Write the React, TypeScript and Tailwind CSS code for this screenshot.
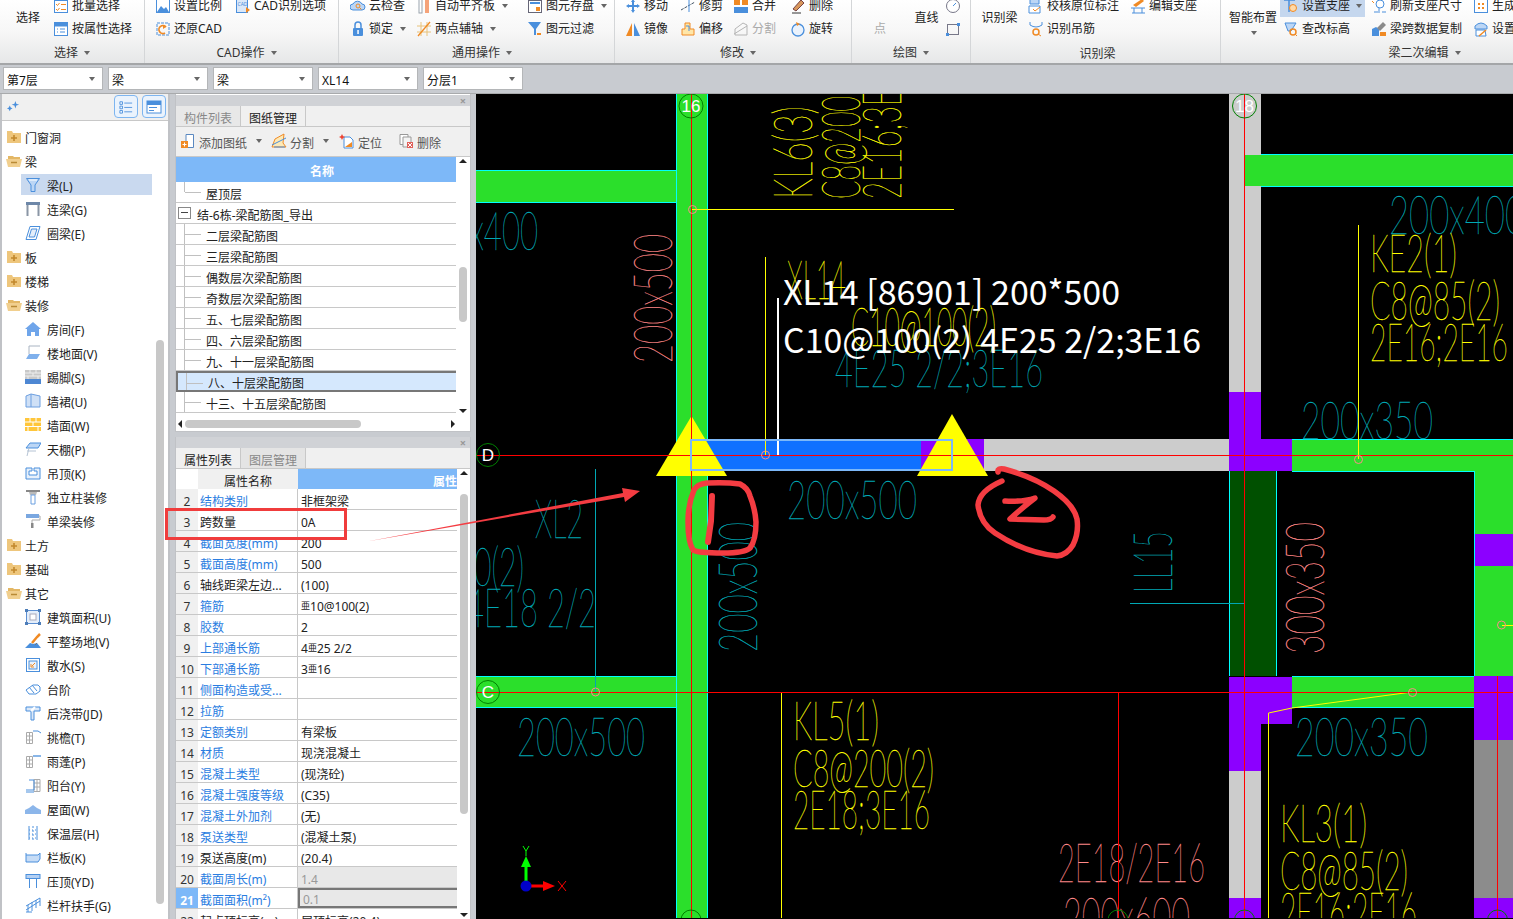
import React from "react";

const B = "#4a8fdc";
const L = "#bcd6f5";
const O = "#f08a24";
const G = "#9aa3ad";

const icons: Record<string, React.ReactNode> = {
  batch: (<><rect x="1.5" y="2.5" width="13" height="12" fill="#fff" stroke={B} /><path d="M3 6l1.5 1.5L6.5 5M8 6.5h5M3 11l1.5 1.5 2-2.5M8 11.500h5" stroke={O} fill="none" /></>),
  prop: (<><rect x="1.5" y="1.500" width="13" height="13" fill="#fff" stroke={B} /><rect x="1.500" y="1.500" width="13" height="4" fill={B} /><path d="M4 8h1M7 8h5M4 11h1M7 11h5" stroke={B} /></>),
  scale: (<><rect x="1.500" y="1.500" width="13" height="13" fill="#fff" stroke={B} /><path d="M2 14l4-6 3 3 2-2 3 5z" fill={B} /></>),
  cadopt: (<><rect x="1.500" y="1.500" width="11" height="13" fill="#dbe8f8" stroke={B} /><text x="2.500" y="8" fontSize="5" fill={B}>CAD</text><path d="M11 9l4 3-4 3z" fill={O} /></>),
  restore: (<><path d="M2 2h12v12H2z" fill="none" stroke={B} strokeDasharray="3 1" /><path d="M11 6a4 4 0 1 0-1 6" fill="none" stroke={O} strokeWidth="1.700" /><path d="M8 4l3 2-3 2z" fill={O} /></>),
  cloud: (<><path d="M3 12a3 3 0 0 1 0-6 5 5 0 0 1 9 0 3 3 0 0 1 0 6z" fill={L} stroke={B} /><circle cx="8" cy="8" r="2" fill="none" stroke={O} /><path d="M9.500 9.500l2 2" stroke={O} /></>),
  align: (<><rect x="3" y="1" width="3" height="14" fill="#fff" stroke={G} /><rect x="9" y="1" width="4" height="14" fill="#f5a37a" /></>),
  save: (<><rect x="1.500" y="2.500" width="13" height="12" fill="#fff" stroke="#667" /><rect x="3" y="4" width="10" height="2" fill={B} /><rect x="9" y="9" width="4" height="4" fill={O} /></>),
  lock: (<><path d="M5 7V4a3 3 0 0 1 6 0v3" fill="none" stroke={B} strokeWidth="1.500" /><rect x="3" y="7" width="10" height="8" rx="1" fill={B} /><rect x="7.300" y="9" width="1.500" height="4" fill="#fff" /></>),
  twopt: (<><path d="M1 5h14M1 11h14M5 1v14M11 1v14" stroke="#e8c27a" /><path d="M2 15L14 1" stroke={O} strokeWidth="1.300" /></>),
  filter: (<><path d="M1 1h13L9 8v6H7V8z" fill={B} /><path d="M10 13h4" stroke={O} strokeWidth="2" /></>),
  move: (<path d="M8 1l2 3H9v3h3V6l3 2-3 2V9H9v3h1l-2 3-2-3h1V9H4v1L1 8l3-2v1h3V4H6z" fill={B} />),
  trim: (<><path d="M1 12l14-8" stroke="#456" strokeDasharray="3 1" /><path d="M9 2v12" stroke={B} /></>),
  merge: (<><rect x="1" y="1" width="6" height="6" fill={O} /><rect x="9" y="1" width="6" height="6" fill={O} /><rect x="1" y="9" width="14" height="6" fill={B} /></>),
  del: (<><path d="M3 11L11 2l3 3-8 8z" fill="#d8975c" stroke="#744" /><path d="M2 15h9" stroke="#333" /></>),
  mirror: (<><path d="M7 2v13H1z" fill={O} /><path d="M9 2v13h6z" fill={B} /></>),
  offset: (<><path d="M5 2h5v6h4v6H2V8h3z" fill="#ffe6a8" stroke={O} /><path d="M6 5h3v5" fill="none" stroke={B} /></>),
  split: (<><path d="M2 14V8l8-6 4 2v10z" fill="none" stroke="#b5b5b5" /><path d="M1 13l13-8" stroke="#b5b5b5" /></>),
  rotate: (<><circle cx="8" cy="9" r="6" fill="#eaf2fc" stroke={B} strokeWidth="1.300" /><path d="M6 1l4 2-3 2z" fill={O} /></>),
  circ: (<><circle cx="8" cy="8" r="6.500" fill="#fff" stroke="#778" /><path d="M8 8l3-3" stroke={B} /></>),
  rect: (<><rect x="2.500" y="3.500" width="11" height="10" fill="none" stroke="#778" /><rect x="1" y="12" width="3" height="3" fill={B} /><rect x="12" y="2" width="3" height="3" fill={B} /></>),
  check: (<><path d="M2 1h9v5H2z" fill={L} stroke={B} /><path d="M1 8h11v7H1z" fill="#fff" stroke={B} /><path d="M5 11l2 2 5-4" stroke={O} fill="none" /></>),
  edit: (<><path d="M3 7L12 1l2 2-8 6z" fill={O} /><path d="M1 10h14M4 10v5M12 10v5M2 15h13" stroke={B} fill="none" /></>),
  hang: (<><path d="M2 1v3q6 4 12 0V1" fill="none" stroke={B} /><circle cx="8" cy="11" r="3" fill="none" stroke={O} strokeWidth="1.500" /><path d="M10 13l3 2" stroke={O} /></>),
  support: (<><path d="M1 2h11M6 2v12" stroke={B} strokeWidth="1.500" /><circle cx="10" cy="10" r="3.500" fill="#ffd9a8" stroke={O} /></>),
  level: (<><path d="M2 2h11l-5 8H5z" fill={L} stroke={B} /><circle cx="10" cy="11" r="3" fill="none" stroke={O} strokeWidth="1.500" /><path d="M12 13l2 2" stroke={O} /></>),
  refresh: (<><circle cx="9" cy="6" r="4" fill="#fff" stroke={B} /><path d="M3 14h4M11 14h4M8 10v5" stroke={B} /><path d="M1 3l2 2" stroke={O} /></>),
  copy: (<><path d="M1 15V8l4-2 3 2v7z" fill={B} /><path d="M6 7l6-6 3 3-6 6z" fill="#8b8b8b" /><path d="M9 11h6v4H9z" fill={O} /></>),
  gen: (<><rect x="1.500" y="1.500" width="13" height="13" fill="#fff" stroke={B} /><path d="M5 5h2v2H5zM9 5h2v2H9zM5 9h2v2H5zM9 9h2v2H9z" fill={O} /></>),
  setup: (<><path d="M2 5q6-6 12 0v3H2z" fill={L} stroke={B} /><path d="M3 9h9l1 6H3z" fill="#fff" stroke={B} /><path d="M6 15l7-6" stroke={O} strokeWidth="1.500" /></>),
  add: (<><path d="M6 1.500h7.500v13H6z" fill="#fff" stroke="#5a88c0" /><rect x="1" y="8" width="7" height="7" fill={O} /><path d="M4.500 9.500v4M2.500 11.500h4" stroke="#fff" /></>),
  cut: (<><path d="M1 14l3-8 9-5-1 9 3 4z" fill="#fde9b6" stroke={O} /><path d="M1 12L15 5" stroke={B} /><path d="M3 14h11" stroke={B} /></>),
  locate: (<><path d="M5 4h6l3 3v8H5z" fill="#fff" stroke={B} /><path d="M6 14l7-5v5z" fill={O} /><path d="M3 1l1 2 2 1-2 1-1 2-1-2-2-1 2-1z" fill="#e43" /></>),
  remove: (<><path d="M2 1.500h8v10H2z" fill="#fff" stroke="#999" /><path d="M5 4h8v10H5z" fill="#f4f4f4" stroke="#999" /><rect x="9" y="9" width="6" height="6" fill="#e0605a" /><path d="M10 10l4 4M14 10l-4 4" stroke="#fff" /></>),
  beam: (<><path d="M1.500 1.500h13L10 8v6.500H6V8z" fill={L} stroke={B} /><path d="M4 3h8" stroke="#fff" /></>),
  link: (<><path d="M1 1h14v3H1z" fill="#6d87a8" /><path d="M2.500 4v11M13.500 4v11" stroke="#8a96a5" strokeWidth="2" /></>),
  ring: (<><path d="M5 1.500h10L11 14.500H1z" fill="#fff" stroke={B} /><path d="M6.500 4h5.500L9.500 12H4z" fill="#e4eefa" stroke={B} /></>),
  room: (<><path d="M8 1L0 8h2v7h4v-4h4v4h4V8h2z" fill="#6fa5ea" /></>),
  floor: (<><path d="M4 1v8M4 1h11" stroke="#a9b4c2" fill="none" /><path d="M4 9h11l-3 5H1z" fill="#7fb0ec" /></>),
  skirt: (<><rect x="0" y="1" width="16" height="9" fill="#c8c8c8" /><path d="M0 4h16M0 7h16M5 1v3M11 1v3M8 4v3M3 7v3M13 7v3" stroke="#eee" /><rect x="0" y="10" width="16" height="5" fill="#4d87d3" /></>),
  wskirt: (<><path d="M1 3l5-2 9 2v11H1z" fill="#cfe0f6" stroke="#6d9fe0" /><path d="M6 1v13" stroke="#6d9fe0" /></>),
  wall: (<><rect x="0" y="1" width="16" height="13" fill="#ffc63a" /><path d="M0 5h16M0 9.500h16M5 1v4M11 1v4M8 5v4.500M3 9.500V14M13 9.500V14" stroke="#fff" /></>),
  ceil: (<><path d="M5 2h11l-3 5H1z" fill="#bcd6f5" stroke={B} /><path d="M4 7l-2 8M2 10h9" stroke="#b5c3d4" /></>),
  drop: (<path d="M1 3h6v3H4v4h8V6H9V3h6v11H1z" fill="#e7f0fb" stroke={B} />),
  col: (<><path d="M1 1h14v2H1z" fill="#888" /><path d="M4 3l1 3h6l1-3" fill="#bbb" /><path d="M6 6h4v9H6z" fill="#fff" stroke="#6a9fe0" /></>),
  roller: (<><rect x="1" y="1" width="13" height="4" fill="#7aa7e0" /><path d="M14 3h1v4H7v3" fill="none" stroke="#aaa" /><rect x="6" y="10" width="2.500" height="5" fill="#888" /></>),
  area: (<><rect x="1.500" y="1.500" width="13" height="13" fill="#e4eefa" stroke="#5c8fd2" /><rect x="5" y="5" width="6" height="6" fill="#fff" stroke="#aab" /><path d="M0 0h3v3H0zM13 0h3v3h-3zM0 13h3v3H0zM13 13h3v3h-3z" fill="#4d7db8" /></>),
  flat: (<><path d="M0 15l5-5 3 1 4-1 4 5z" fill={B} /><path d="M12 10l-2 2" stroke="#777" /><path d="M7 10l5-6 3-3" stroke={O} strokeWidth="2.500" /></>),
  apron: (<><rect x="1.500" y="1.500" width="13" height="13" fill="none" stroke={B} /><rect x="4" y="4" width="8" height="8" fill="#eaf2fc" stroke={B} /><path d="M10 6l-3 3M6 7v3h3" stroke={O} fill="none" /></>),
  steps: (<><path d="M1 9l7-5h5l2 2v4l-4 3H4z" fill="#fff" stroke={B} /><path d="M4 6l5 6M7 4l5 6" stroke={B} /></>),
  post: (<><path d="M1 2h14v4H9v9H6V6H1z" fill="#dbe8f8" stroke={B} /><path d="M6 6l4-4" stroke="#fff" strokeWidth="2" /></>),
  eave: (<><path d="M1.500 3.500h6v11h-6zM1 7h7M1 11h7M4.500 3.500v11" fill="none" stroke="#aaa" /><path d="M8 2h5l3 2" stroke={B} fill="none" /></>),
  canopy: (<><path d="M1.500 3.500h6v11h-6zM1 7h7M1 11h7M4.500 3.500v11" fill="none" stroke="#aaa" /><path d="M8 3h8" stroke={B} strokeWidth="1.300" /></>),
  balc: (<><path d="M9 2.500h6v12H9zM9 6h6M9 10h6M12 2.500v12" fill="none" stroke="#aaa" /><path d="M4 3h5M9 3v10M1 13h8M1 15h8" stroke={B} fill="none" /></>),
  roof: (<path d="M0 9l4-2 4-3 4 3 4 2v4H0z" fill="#8cb6ea" />),
  ins: (<><path d="M4 1v14M12 1v14" stroke={B} /><path d="M8 1v14" stroke={B} strokeDasharray="2 2" /><path d="M4 5h8M4 9h8M4 13h8" stroke={B} strokeDasharray="1 2" /></>),
  para: (<><path d="M1 6h12l2-2v6l-2 3H1z" fill="#c6dcf6" stroke={B} /><path d="M1 4v2" stroke={B} /></>),
  coping: (<><rect x="1" y="1.500" width="14" height="4" fill="#b4d0f3" stroke={B} /><path d="M4.500 5.500V15M11.500 5.500V15" stroke={B} /></>),
  rail: (<><path d="M1 13l14-9M1 9l14-8M3 8v7M7 5v9M11 3v8M15 1v8" stroke={B} fill="none" /><path d="M1 15h6" stroke={B} /></>),
};

function Ic({ n, size = 16 }: { n: string; size?: number }) {
  return (
    <svg viewBox="0 0 16 16" width={size} height={size} className="shrink-0">
      {icons[n]}
    </svg>
  );
}

function Caret({ cls = "ml-[4px]" }: { cls?: string }) {
  return <span className={`inline-block shrink-0 border-x-[3px] border-t-[4px] border-x-transparent border-t-[#666] ${cls}`} />;
}

function R({ i, t, caret, muted, cap, cls = "" }: { i: string; t: string; caret?: boolean; muted?: boolean; cap?: string; cls?: string }) {
  return (
    <div className={`flex h-[23px] items-center gap-[3px] whitespace-nowrap ${muted ? "text-[#aaa]" : "text-[#222]"} ${cls}`}>
      <Ic n={i} />
      <span>{t}</span>
      {caret && <Caret cls={cap} />}
    </div>
  );
}

function Group({ w, label, caret = true, low, labelCls = "", children }: { w: string; label: string; caret?: boolean; low?: boolean; labelCls?: string; children: React.ReactNode }) {
  return (
    <div className={`flex h-[63px] shrink-0 flex-col border-r border-[#d4d6d8] ${w}`}>
      <div className="-mt-[6px] flex h-[46px]">{children}</div>
      <div className={`flex h-[22px] items-center justify-center gap-[6px] text-[#333] ${low ? "mt-[4px]" : "mt-[2px]"} ${labelCls}`}>
        <span>{label}</span>
        {caret && <Caret cls="" />}
      </div>
    </div>
  );
}

function Big({ t, w, extra }: { t: string; w: string; extra?: React.ReactNode }) {
  return (
    <div className={`relative flex shrink-0 items-center justify-center whitespace-nowrap pt-[2px] text-[#222] ${w}`}>
      {t}
      {extra}
    </div>
  );
}

function Ribbon() {
  return (
    <div className="flex h-[66px] overflow-hidden border-b-2 border-[#a4a6a8] bg-gradient-to-b from-white via-[#f7f7f7] to-[#e6e7e8]">
      <Group w="w-[145px]" label="选择">
        <Big t="选择" w="w-[53px] pl-[3px]" />
        <div>
          <R i="batch" t="批量选择" />
          <R i="prop" t="按属性选择" />
        </div>
      </Group>
      <Group w="w-[194px] pl-[10px]" label="CAD操作">
        <div className="w-[80px]">
          <R i="scale" t="设置比例" />
          <R i="restore" t="还原CAD" />
        </div>
        <R i="cadopt" t="CAD识别选项" />
      </Group>
      <Group w="w-[276px] pl-[11px]" label="通用操作">
        <div className="w-[66px]">
          <R i="cloud" t="云检查" />
          <R i="lock" t="锁定" caret />
        </div>
        <div className="w-[111px]">
          <R i="align" t="自动平齐板" caret />
          <R i="twopt" t="两点辅轴" caret />
        </div>
        <div>
          <R i="save" t="图元存盘" caret />
          <R i="filter" t="图元过滤" />
        </div>
      </Group>
      <Group w="w-[237px] pl-[10px]" label="修改">
        <div className="w-[55px]">
          <R i="move" t="移动" />
          <R i="mirror" t="镜像" />
        </div>
        <div className="w-[53px]">
          <R i="trim" t="修剪" />
          <R i="offset" t="偏移" />
        </div>
        <div className="w-[57px]">
          <R i="merge" t="合并" />
          <R i="split" t="分割" muted />
        </div>
        <div>
          <R i="del" t="删除" />
          <R i="rotate" t="旋转" />
        </div>
      </Group>
      <Group w="w-[119px]" label="绘图">
        <div className="flex w-[56px] items-end justify-center pb-[5px] text-[#aaa]">点</div>
        <Big t="直线" w="w-[37px]" />
        <div>
          <div className="flex h-[23px] items-center">
            <Ic n="circ" />
          </div>
          <div className="flex h-[23px] items-center">
            <Ic n="rect" />
          </div>
        </div>
      </Group>
      <Group w="w-[250px]" label="识别梁" caret={false} low labelCls="pl-[4px]">
        <Big t="识别梁" w="w-[57px]" />
        <div className="w-[102px]">
          <R i="check" t="校核原位标注" />
          <R i="hang" t="识别吊筋" />
        </div>
        <R i="edit" t="编辑支座" />
      </Group>
      <Group w="grow" label="梁二次编辑" labelCls="pl-[112px]">
        <Big
          t="智能布置"
          w="w-[59px] pl-[5px]"
          extra={<span className="absolute bottom-[5px] left-[30px] border-x-[3px] border-t-[4px] border-x-transparent border-t-[#666]" />}
        />
        <div className="w-[85px]">
          <R i="support" t="设置支座" caret cap="ml-[3px]" cls="bg-[#c5d7ee] pl-[3px]" />
          <R i="level" t="查改标高" cls="pl-[3px]" />
        </div>
        <div className="w-[108px] pl-[6px]">
          <R i="refresh" t="刷新支座尺寸" />
          <R i="copy" t="梁跨数据复制" />
        </div>
        <div>
          <R i="gen" t="生成" />
          <R i="setup" t="设置" />
        </div>
      </Group>
    </div>
  );
}

function Combo({ t }: { t: string }) {
  return (
    <div className="flex h-[23px] w-[100px] items-center justify-between border border-[#b4b6b8] bg-white pl-[3px] pr-[7px] text-[#111]">
      <span className="pt-[4px]">{t}</span>
      <Caret cls="" />
    </div>
  );
}

type Nav = [string, "c" | "o" | string];
const NAV: Nav[] = [
  ["门窗洞", "c"], ["梁", "o"], ["梁(L)", "beam"], ["连梁(G)", "link"], ["圈梁(E)", "ring"], ["板", "c"], ["楼梯", "c"], ["装修", "o"],
  ["房间(F)", "room"], ["楼地面(V)", "floor"], ["踢脚(S)", "skirt"], ["墙裙(U)", "wskirt"], ["墙面(W)", "wall"], ["天棚(P)", "ceil"], ["吊顶(K)", "drop"], ["独立柱装修", "col"], ["单梁装修", "roller"],
  ["土方", "c"], ["基础", "c"], ["其它", "o"],
  ["建筑面积(U)", "area"], ["平整场地(V)", "flat"], ["散水(S)", "apron"], ["台阶", "steps"], ["后浇带(JD)", "post"], ["挑檐(T)", "eave"], ["雨蓬(P)", "canopy"], ["阳台(Y)", "balc"], ["屋面(W)", "roof"], ["保温层(H)", "ins"], ["栏板(K)", "para"], ["压顶(YD)", "coping"], ["栏杆扶手(G)", "rail"],
];

function Folder({ open }: { open: boolean }) {
  return (
    <svg viewBox="0 0 16 14" width="16" height="14" className="shrink-0">
      {open ? (
        <>
          <path d="M2 2h5l1 1h6v3H2z" fill="#e3b765" />
          <path d="M0 5h16l-2 8H2z" fill="#f1cf8e" />
          <path d="M5 8.500h6" stroke="#b98a35" strokeWidth="1.500" />
        </>
      ) : (
        <>
          <path d="M1 1h5l1 2h8v10H1z" fill="#eec67c" />
          <path d="M8 5v6M5 8h6" stroke="#c2882c" strokeWidth="1.600" />
        </>
      )}
    </svg>
  );
}

function Sidebar() {
  return (
    <div className="relative h-full w-[170px] shrink-0 overflow-hidden border-x-2 border-l-[#c0c2c6] border-r-[#c0c2c6] bg-white">
      <div className="flex h-[27px] items-center justify-between border-b border-[#c8c8c8] bg-[#f0f0f0] pl-[4px] pr-[2px]">
        <svg viewBox="0 0 16 16" width="15" height="15">
          <path d="M10 2l1 3 3 1-3 1-1 3-1-3-3-1 3-1zM4 7l1 2 2 1-2 1-1 2-1-2-2-1 2-1z" fill={B} />
        </svg>
        <div className="flex gap-[4px]">
          <div className="flex h-[23px] w-[24px] items-center justify-center rounded-[4px] border border-[#7db5f0] bg-[#eaf3fd]">
            <svg viewBox="0 0 16 16" width="14" height="14"><path d="M1 2h3v3H1zM1 7h3v3H1zM1 12h3v3H1z" fill="none" stroke={B} /><path d="M6 3.500h9M6 8.500h9M6 13.500h9" stroke={B} /></svg>
          </div>
          <div className="flex h-[23px] w-[24px] items-center justify-center rounded-[4px] border border-[#7db5f0] bg-[#eaf3fd]">
            <svg viewBox="0 0 16 16" width="16" height="16"><rect x="1" y="2" width="14" height="12" fill="#fff" stroke={B} /><rect x="1" y="2" width="14" height="4" fill={B} /><path d="M3 8.500h8M3 11.500h5" stroke={B} /></svg>
          </div>
        </div>
      </div>
      <div className="pt-[4px]">
        {NAV.map(([t, k]) =>
          k === "c" || k === "o" ? (
            <div key={t} className="flex h-[24px] items-center gap-[3px] pl-[4px] text-[#222]">
              <Folder open={k === "o"} />
              <span className="pt-[4px]">{t}</span>
            </div>
          ) : (
            <div key={t} className="flex h-[24px] items-center pl-[19px] text-[#222]">
              <div className={`flex h-[21px] items-center gap-[6px] pl-[4px] ${k === "beam" ? "w-[131px] bg-[#c9d9ef]" : ""}`}>
                <Ic n={k} />
                <span className="pt-[4px]">{t}</span>
              </div>
            </div>
          ),
        )}
      </div>
      <div className="absolute left-[154px] top-[246px] h-[564px] w-[8px] rounded-[4px] bg-[#c8c8c8]" />
    </div>
  );
}

function Strip() {
  return <div className="flex h-[11px] shrink-0 items-center justify-end bg-[#d0d2d6] pr-[4px] text-[11px] font-bold leading-none text-[#999]">×</div>;
}

function Tabs({ a, b, first }: { a: string; b: string; first: boolean }) {
  return (
    <div className="flex h-[21px] shrink-0 border-b border-[#c8c8c8] bg-[#f0f0f0]">
      <div className={`flex w-[65px] items-center justify-center border-r border-[#c8c8c8] pt-[6px] ${first ? "bg-[#f0f0f0] text-[#222]" : "bg-[#e8e8e8] text-[#888]"}`}>{a}</div>
      <div className={`flex w-[65px] items-center justify-center border-r border-[#c8c8c8] pt-[6px] ${first ? "bg-[#e4e4e4] text-[#888]" : "bg-[#f0f0f0] text-[#222]"}`}>{b}</div>
    </div>
  );
}

const TREE = ["二层梁配筋图", "三层梁配筋图", "偶数层次梁配筋图", "奇数层次梁配筋图", "五、七层梁配筋图", "四、六层梁配筋图", "九、十一层梁配筋图", "八、十层梁配筋图", "十三、十五层梁配筋图"];

function TreeRow({ t, sel, last }: { t: string; sel?: boolean; last?: boolean }) {
  return (
    <div className={`relative flex h-[21px] items-center pl-[30px] ${sel ? "border-y-2 border-l-2 border-[#777] bg-[#d5e8fd]" : "border-b border-[#c8c8c8]"}`}>
      <span className={`absolute left-[8px] top-0 w-px bg-[#c0c0c0] ${last ? "h-[10px]" : "h-full"}`} />
      <span className="absolute left-[9px] top-[10px] h-px w-[16px] bg-[#c0c0c0]" />
      <span className={`text-[#222] ${sel ? "pt-[5px]" : "pt-[7px]"}`}>{t}</span>
    </div>
  );
}

function DrawingPanel() {
  return (
    <div className="flex h-[338px] shrink-0 flex-col border-x border-b border-[#c0c2c6] bg-white pt-px">
      <Strip />
      <Tabs a="构件列表" b="图纸管理" first={false} />
      <div className="flex h-[30px] shrink-0 items-center border-b border-[#c8c8c8] bg-[#f0f0f0] pl-[4px] text-[#555]">
        <div className="flex w-[91px] items-center gap-[3px]"><Ic n="add" /><span className="pt-[6px]">添加图纸</span><Caret cls="ml-[6px]" /></div>
        <div className="flex w-[68px] items-center gap-[3px]"><Ic n="cut" /><span className="pt-[6px]">分割</span><Caret cls="ml-[6px]" /></div>
        <div className="flex w-[59px] items-center gap-[3px]"><Ic n="locate" /><span className="pt-[6px]">定位</span></div>
        <div className="flex items-center gap-[3px]"><Ic n="remove" /><span className="pt-[6px]">删除</span></div>
      </div>
      <div className="relative flex min-h-0 grow">
        <div className="w-[281px] overflow-hidden">
          <div className="flex h-[25px] items-center justify-center bg-[#7db8f8] pl-[12px] pt-[6px] font-bold text-white">名称</div>
          <TreeRow t="屋顶层" last />
          <div className="flex h-[21px] items-center gap-[6px] border-b border-[#c8c8c8] pl-[2px] text-[#222]">
            <span className="flex h-[12px] w-[13px] items-center justify-center border border-[#888] bg-white">
              <span className="h-px w-[7px] bg-[#444]" />
            </span>
            <span className="pt-[7px]">结-6栋-梁配筋图_导出</span>
          </div>
          {TREE.map((t) => (
            <TreeRow key={t} t={t} sel={t === "八、十层梁配筋图"} />
          ))}
        </div>
        <div className="relative w-[14px] bg-white">
          <span className="absolute left-[3px] top-[2px] border-x-[4px] border-b-[4px] border-x-transparent border-b-[#222]" />
          <span className="absolute left-[3px] top-[252px] border-x-[4px] border-t-[4px] border-x-transparent border-t-[#222]" />
          <div className="absolute left-[3px] top-[110px] h-[55px] w-[8px] rounded-[4px] bg-[#c8c8c8]" />
        </div>
        <div className="absolute bottom-0 left-0 flex h-[14px] w-[281px] items-center bg-white">
          <span className="ml-[2px] border-y-[4px] border-r-[4px] border-y-transparent border-r-[#222]" />
          <div className="ml-[3px] h-[8px] w-[176px] rounded-[4px] bg-[#c8c8c8]" />
          <span className="ml-auto mr-[2px] border-y-[4px] border-l-[4px] border-y-transparent border-l-[#222]" />
        </div>
      </div>
    </div>
  );
}

function Rebar({ a, b }: { a: string; b: string }) {
  return (
    <span>
      {a}
      <span className="align-[2px] text-[9px]">亜</span>
      {b}
    </span>
  );
}

type Prop = [number, string, boolean, React.ReactNode];
const PROPS: Prop[] = [
  [2, "结构类别", true, "非框架梁"],
  [3, "跨数量", false, "0A"],
  [4, "截面宽度(mm)", true, "200"],
  [5, "截面高度(mm)", true, "500"],
  [6, "轴线距梁左边...", false, "(100)"],
  [7, "箍筋", true, <Rebar a="" b="10@100(2)" />],
  [8, "胶数", true, "2"],
  [9, "上部通长筋", true, <Rebar a="4" b="25 2/2" />],
  [10, "下部通长筋", true, <Rebar a="3" b="16" />],
  [11, "侧面构造或受...", true, ""],
  [12, "拉筋", true, ""],
  [13, "定额类别", true, "有梁板"],
  [14, "材质", true, "现浇混凝土"],
  [15, "混凝土类型", true, "(现浇砼)"],
  [16, "混凝土强度等级", true, "(C35)"],
  [17, "混凝土外加剂", true, "(无)"],
  [18, "泵送类型", true, "(混凝土泵)"],
  [19, "泵送高度(m)", false, "(20.4)"],
  [20, "截面周长(m)", true, "1.4"],
  [21, "截面面积(m²)", true, "0.1"],
  [22, "起点顶标高(m)", false, "屋顶标高(20.4)"],
];

function PropPanel() {
  return (
    <div className="flex min-h-0 grow flex-col border-x border-[#c0c2c6] bg-white">
      <Strip />
      <Tabs a="属性列表" b="图层管理" first />
      <div className="relative flex min-h-0 grow overflow-hidden">
        <div className="w-[281px] shrink-0">
          <div className="flex h-[20px]">
            <div className="w-[22px] bg-white" />
            <div className="flex w-[100px] items-center justify-center bg-[#f0f0f0] pt-[6px] text-[#222]">属性名称</div>
            <div className="flex grow items-center justify-end overflow-hidden bg-[#7db8f8] pt-[6px] font-bold text-white">属性</div>
          </div>
          {PROPS.map(([n, name, link, val]) => (
            <div key={n} className="flex h-[21px] border-b border-[#c8c8c8]">
              <div className={`flex w-[22px] items-center justify-center pt-[7px] ${n === 21 ? "bg-[#7db8f8] font-bold text-white" : "bg-[#f0f0f0] text-[#333]"}`}>{n}</div>
              <div className={`flex w-[100px] items-center whitespace-nowrap border-r border-[#c8c8c8] pl-[2px] pt-[7px] ${link ? "text-[#2a7de1]" : "text-[#222]"}`}>{name}</div>
              <div className={`flex grow items-center whitespace-nowrap pl-[3px] ${n >= 20 && n <= 21 ? "bg-[#e8e8e8] text-[#999]" : "text-[#222]"} ${n === 21 ? "border-2 border-r-0 border-[#777] pl-[2px] pt-[5px]" : "pt-[7px]"}`}>{val}</div>
            </div>
          ))}
        </div>
        <div className="relative w-[14px]">
          <span className="absolute left-[3px] top-[2px] border-x-[4px] border-b-[4px] border-x-transparent border-b-[#222]" />
          <div className="absolute left-[3px] top-[25px] h-[320px] w-[8px] rounded-[4px] bg-[#c8c8c8]" />
          <span className="absolute bottom-[2px] left-[3px] border-x-[4px] border-t-[4px] border-x-transparent border-t-[#222]" />
        </div>
      </div>
    </div>
  );
}

const YEL = "#ffff00";
const TEAL = "#00a8b4";
const PINK = "#ff8a8a";
const GRN = "#2bdf2b";
const CY = "#00ffff";
const PUR = "#8c00ff";
const RED = "#ff0000";

function T({ x0, x1, top, bot, s, c, v }: { x0: number; x1: number; top: number; bot: number; s: string; c: string; v?: boolean }) {
  const h = v ? x1 - x0 : bot - top;
  const fs = h / 0.72;
  const common = { fill: c, stroke: c, strokeWidth: 0.35, fontSize: fs, fontWeight: 100, fontFamily: "Lato, Roboto, Inter, sans-serif", lengthAdjust: "spacingAndGlyphs" as const };
  if (v) {
    return (
      <text x={x1} y={bot} textLength={bot - top} transform={`rotate(-90 ${x1} ${bot})`} {...common}>
        {s}
      </text>
    );
  }
  return (
    <text x={x0} y={bot} textLength={x1 - x0} {...common}>
      {s}
    </text>
  );
}

function Dot({ x, y }: { x: number; y: number }) {
  return <circle cx={x} cy={y} r="4" fill="none" stroke={PINK} />;
}

function Axis({ x, y, s, r = 11.500 }: { x: number; y: number; s: string; r?: number }) {
  return (
    <>
      <circle cx={x} cy={y} r={r} fill="none" stroke="#008000" />
      <text x={x} y={y + 6} textAnchor="middle" fontSize="17" fill="#fff" fontFamily="Liberation Sans, sans-serif">{s}</text>
    </>
  );
}

function Canvas() {
  return (
    <div className="relative h-full grow overflow-hidden bg-black">
      <svg viewBox="476 95 1037 824" width="1037" height="824" className="block">
        <rect x="476" y="171" width="200" height="33" fill={GRN} />
        <path d="M476 171.500h200M476 203.500h200" stroke={CY} />
        <rect x="476" y="677" width="200" height="32" fill={GRN} />
        <path d="M476 677.500h200M476 708.500h200" stroke={CY} />
        <rect x="676" y="95" width="32" height="824" fill={GRN} />
        <path d="M676.500 95v824M707.500 95v824" stroke={CY} />

        <rect x="1229" y="95" width="32" height="298" fill="#cccccc" />
        <rect x="1229" y="393" width="32" height="79" fill={PUR} />
        <rect x="1245" y="156" width="268" height="31" fill={GRN} />
        <path d="M1261 155.500h252M1261 187.500h252" stroke={CY} />
        <rect x="984" y="440" width="245" height="32" fill="#cccccc" />
        <rect x="1229" y="440" width="63" height="32" fill={PUR} />
        <rect x="1292" y="440" width="221" height="32" fill={GRN} />
        <path d="M1292 440.500h221M1292 472.500h182" stroke={CY} />
        <rect x="1229" y="472" width="48" height="205" fill="#005000" />
        <path d="M1229.500 472v205M1276.500 472v205" stroke={CY} />
        <rect x="1474" y="472" width="39" height="63" fill={GRN} />
        <rect x="1474" y="535" width="39" height="32" fill={PUR} />
        <rect x="1474" y="567" width="39" height="110" fill={GRN} />
        <rect x="1474" y="677" width="39" height="64" fill={PUR} />
        <rect x="1474" y="741" width="39" height="158" fill="#8c8c8c" />
        <rect x="1474" y="899" width="39" height="20" fill={PUR} />
        <path d="M1474.500 472v205" stroke={CY} />
        <path d="M1229 678h63v47h-31v47h-32z" fill={PUR} />
        <rect x="1292" y="677" width="182" height="32" fill={GRN} />
        <path d="M1292 677.500h182M1292 708.500h182" stroke={CY} />
        <rect x="1229" y="772" width="32" height="127" fill="#cccccc" />
        <rect x="1229" y="899" width="32" height="20" fill={PUR} />

        <rect x="691" y="440" width="230" height="32" fill="#1071ff" />
        <rect x="921" y="440" width="63" height="32" fill={PUR} />

        <T v x0={773} x1={812} top={107} bot={200} s="KL6(3)" c={YEL} />
        <T v x0={821} x1={860} top={90} bot={200} s="C8@200(" c={YEL} />
        <T v x0={862} x1={901} top={90} bot={200} s="2E16;3E" c={YEL} />
        <T v x0={633} x1={672} top={235} bot={364} s="200x500" c={PINK} />
        <T x0={470} x1={538} top={212} bot={251} s="x400" c={TEAL} />
        <T x0={787} x1={846} top={261} bot={300} s="XL14" c={YEL} />
        <T x0={851} x1={996} top={308} bot={347} s="C10@100(2)" c={YEL} />
        <T x0={835} x1={1043} top={350} bot={388} s="4E25 2/2;3E16" c={TEAL} />
        <T x0={787} x1={917} top={481} bot={520} s="200x500" c={TEAL} />
        <T x0={535} x1={583} top={500} bot={539} s="XL2" c={TEAL} />
        <T x0={474} x1={524} top={548} bot={587} s="0(2)" c={TEAL} />
        <T x0={466} x1={596} top={589} bot={628} s="4E18 2/2" c={TEAL} />
        <T v x0={718} x1={757} top={523} bot={653} s="200x500" c={TEAL} />
        <T x0={517} x1={645} top={718} bot={757} s="200x500" c={TEAL} />
        <T x0={793} x1={879} top={702} bot={741} s="KL5(1)" c={YEL} />
        <T x0={793} x1={934} top={750} bot={788} s="C8@200(2)" c={YEL} />
        <T x0={793} x1={930} top={791} bot={830} s="2E18;3E16" c={YEL} />
        <T x0={1389} x1={1525} top={196} bot={235} s="200x400" c={TEAL} />
        <T x0={1370} x1={1457} top={235} bot={273} s="KE2(1)" c={YEL} />
        <T x0={1370} x1={1500} top={282} bot={321} s="C8@85(2)" c={YEL} />
        <T x0={1370} x1={1508} top={324} bot={362} s="2E16;2E16" c={YEL} />
        <T x0={1301} x1={1433} top={402} bot={440} s="200x350" c={TEAL} />
        <T v x0={1133} x1={1172} top={532} bot={594} s="LL15" c={TEAL} />
        <T v x0={1285} x1={1324} top={523} bot={655} s="300x350" c={PINK} />
        <T x0={1295} x1={1428} top={718} bot={757} s="200x350" c={TEAL} />
        <T x0={1280} x1={1367} top={805} bot={843} s="KL3(1)" c={YEL} />
        <T x0={1280} x1={1408} top={852} bot={891} s="C8@85(2)" c={YEL} />
        <T x0={1280} x1={1417} top={893} bot={932} s="2E16;2E16" c={YEL} />
        <T x0={1058} x1={1205} top={844} bot={883} s="2E18/2E16" c={PINK} />
        <T x0={1063} x1={1190} top={898} bot={937} s="200x600" c={PINK} />

        <path d="M691 210.500h263M765.500 258v198M1358.500 226v234M781.500 693v226" stroke={YEL} fill="none" />
        <path d="M1412 693L1292 709 1268.500 714V919M1502 626.500h11" stroke={YEL} fill="none" />
        <path d="M595.500 470v223M1130 604.500h115" stroke={TEAL} fill="none" />
        <rect x="777" y="299" width="2" height="157" fill="#fff" />

        <path d="M691.500 417L727 477H656z" fill={YEL} />
        <path d="M952 415L988 477H917z" fill={YEL} />

        <path d="M691.500 95v824M1244.500 95v824M476 456.500h1037M476 693.500h1037M1118.500 693v226M1497.500 677v242" stroke={RED} fill="none" />
        <rect x="691" y="441" width="261" height="30" fill="none" stroke="#7cb8f8" strokeWidth="2" />
        <Axis x={691} y={107} s="16" r={12} />
        <Axis x={1244.500} y={107} s="18" r={12} />
        <Axis x={488} y={456} s="D" />
        <Axis x={488} y={693} s="C" />
        <circle cx="691" cy="921" r="10" fill="none" stroke="#008000" />
        <circle cx="1118" cy="921" r="10" fill="none" stroke="#008000" />
        <circle cx="1244.500" cy="921" r="10" fill="none" stroke="#008000" />
        <circle cx="1497.500" cy="921" r="10" fill="none" stroke="#008000" />
        <Dot x={692.500} y={210.500} />
        <Dot x={765.500} y={456} />
        <Dot x={1358.500} y={460.500} />
        <Dot x={595.500} y={693} />
        <Dot x={1412.500} y={693.500} />
        <Dot x={1501.500} y={626} />

        <path d="M526 882v-20" stroke="#00ff00" strokeWidth="3" />
        <path d="M526 857l5 11h-10z" fill="#00ff00" />
        <path d="M523 847l3 5 3-5M526 852v5" stroke="#00ff00" fill="none" />
        <path d="M530 887h14" stroke={RED} strokeWidth="3" />
        <path d="M555 887l-12-5v10z" fill={RED} />
        <path d="M558 882l8 10M566 882l-8 10" stroke={RED} fill="none" />
        <circle cx="526" cy="887" r="5.500" fill="#0000c8" />

        <text x="783" y="306" fontSize="34" fill="#fff" textLength="337" lengthAdjust="spacingAndGlyphs" fontFamily="Noto Sans CJK SC, sans-serif">XL14 [86901] 200*500</text>
        <text x="783" y="354" fontSize="34" fill="#fff" textLength="418" lengthAdjust="spacingAndGlyphs" fontFamily="Noto Sans CJK SC, sans-serif">C10@100(2) 4E25 2/2;3E16</text>

        <g fill="none" stroke="#f43c42" strokeLinecap="round" strokeLinejoin="round" strokeWidth="5.500">
          <path d="M712 497l-1 25-3 21" strokeWidth="6" />
          <path d="M694 491q-6 14-6 32 0 20 5 28 4 3 30 3 22 0 27-5 6-8 6-26-1-14-6-26-2-8-10-12-14-2-33-1-10 1-13 7z" />
          <path d="M998 473q-1-4 6-3 30 8 50 22 20 14 23 28 2 14-4 26-6 10-16 11-32-3-62-23-15-10-17-28 1-14 24-24" />
          <path d="M1005 502q18 1 30-3-13 10-25 21l34 1q7 0 9-3" />
        </g>
      </svg>
    </div>
  );
}

export default function App() {
  return (
    <div className="relative flex h-[919px] w-[1513px] flex-col overflow-hidden bg-[#c8cbd0] text-[12px] leading-none font-['Noto_Sans','Noto_Sans_CJK_SC',sans-serif]">
      <Ribbon />
      <div className="flex h-[29px] items-center gap-[5px] border-b border-[#a8aaac] pl-[3px]">
        <Combo t="第7层" />
        <Combo t="梁" />
        <Combo t="梁" />
        <Combo t="XL14" />
        <Combo t="分层1" />
      </div>
      <div className="flex min-h-0 grow">
        <Sidebar />
        <div className="ml-[5px] flex h-full w-[296px] shrink-0 flex-col gap-[5px]">
          <DrawingPanel />
          <PropPanel />
        </div>
        <div className="w-[5px] shrink-0" />
        <Canvas />
      </div>
      <div className="absolute left-[165px] top-[508px] h-[32px] w-[182px] border-[3px] border-[#f03c3c]" />
      <svg className="absolute left-[360px] top-[480px]" width="290" height="70" viewBox="360 480 290 70">
        <path d="M367 541.500L623 493l-1-5 18 3-15 11-1-5z" fill="#f43c42" />
      </svg>
    </div>
  );
}
